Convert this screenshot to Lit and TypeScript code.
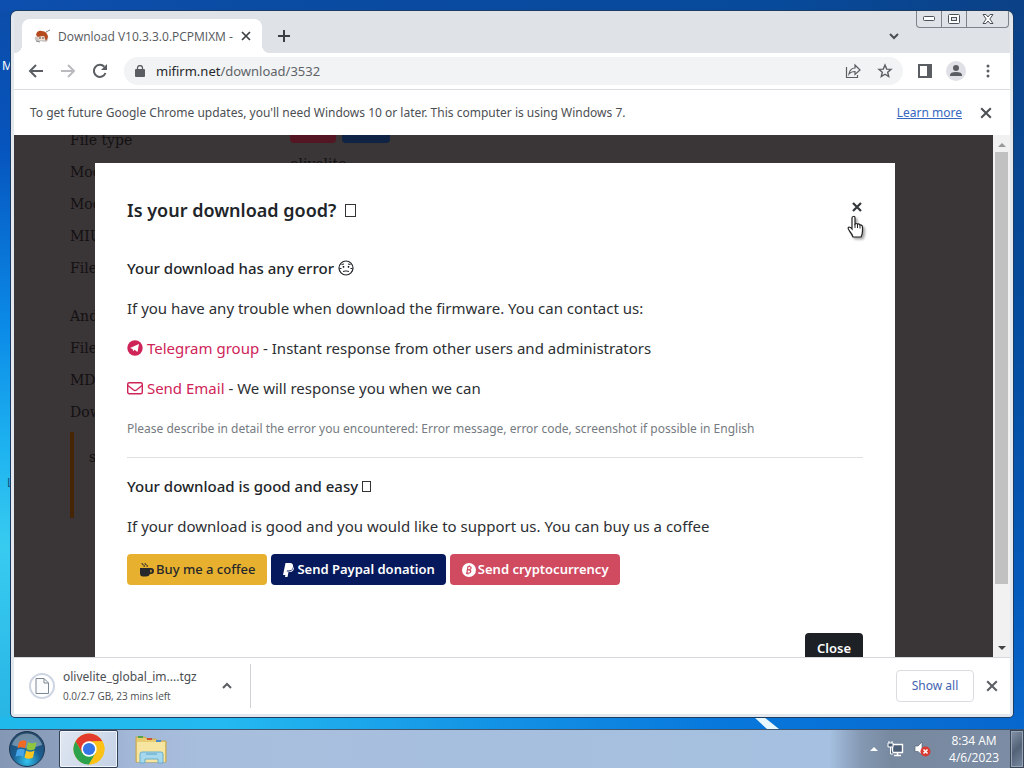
import { LitElement, html, css } from "lit";
import { customElement } from "lit/decorators.js";

const cross = (s: number, w: number) => html`<svg width=${s} height=${s} viewBox="0 0 10 10"><path d="M1 1L9 9M9 1L1 9" stroke="currentColor" stroke-width=${w} fill="none"/></svg>`;

@customElement("browser-chrome")
class BrowserChrome extends LitElement {
  static styles = css`
    :host { display: block; color: #5a5e63; }
    * { box-sizing: border-box; }
    svg { display: block; flex: none; }
    button { border: 0; padding: 0; background: none; color: inherit; font: inherit; display: flex; align-items: center; justify-content: center; }
    .strip { height: 42px; background: #dfe2e7; display: flex; align-items: flex-end; padding-left: 8px; border-radius: 5px 5px 0 0; position: relative; }
    .tab { width: 240px; height: 34px; background: #fff; border-radius: 8px 8px 0 0; display: flex; align-items: center; padding: 0 9px 0 12px; gap: 8px; position: relative; }
    .tab::before, .tab::after { content: ""; position: absolute; bottom: 0; width: 8px; height: 8px; }
    .tab::before { left: -8px; background: radial-gradient(circle at 0 0, transparent 8px, #fff 8px); }
    .tab::after { right: -8px; background: radial-gradient(circle at 100% 0, transparent 8px, #fff 8px); }
    .tabtext { flex: 1; min-width: 0; font-family: "Open Sans", sans-serif; font-size: 12px; white-space: nowrap; color: #55585c; }
    .close { width: 14px; height: 14px; color: #3c4043; }
    .plus { width: 28px; height: 34px; margin-left: 8px; color: #3c4043; }
    .search { margin-left: auto; width: 20px; height: 34px; margin-right: 106px; color: #4b4f54; }
    .caption { position: absolute; right: 1px; top: 0; height: 17px; display: flex; border: 1px solid #7d838b; border-top: 0; border-radius: 0 0 4px 4px; color: #4b515a; }
    .caption button { width: 25px; border-right: 1px solid #7d838b; }
    .caption button:last-child { width: 41px; border-right: 0; }
    .bar { height: 37px; display: flex; align-items: center; background: #fff; padding: 0 14px; border-bottom: 1px solid #dadce0; }
    .nav { width: 16px; height: 16px; margin-right: 16px; }
    .nav.off { color: #b9bbbe; }
    .omni { flex: 1; height: 28px; border-radius: 14px; background: #f1f3f4; display: flex; align-items: center; padding: 0 10px 0 11px; }
    .url { position: relative; flex: 1; font-size: 13px; margin-left: 11px; white-space: nowrap; color: #5f6368; }
    .url input { border: 0; background: none; outline: 0; font: inherit; padding: 0; width: 100%; position: absolute; inset: 0; opacity: 0; }
    .url b { font-weight: 400; color: #27292c; }
    .icons { display: flex; gap: 16px; }
    .side { display: flex; align-items: center; margin-left: 15px; gap: 14px; }
    .side button:last-child { width: 16px; }
    .avatar { width: 20px; height: 20px; border-radius: 50%; background: #dfe1e6; }
    .info { height: 45px; display: flex; align-items: center; padding: 0 18px 0 16px; font-size: 12px; color: #4c4f53; background: #fff; white-space: nowrap; }
    .info a { margin-left: auto; margin-right: 18px; color: #3867c0; text-decoration: underline; }
  `;
  render() {
    return html`
      <div class="strip">
        <div class="tab">
          <svg width="16" height="16" viewBox="0 0 16 16"><path d="M1 9Q0 14 5 13L12 14Q15 12 14 8L12 5Z" fill="#c9c6c4"/><path d="M2 7Q3 2 8 3Q13 3 14 9L12 13L10 8L4 9Z" fill="#b54a1e"/><path d="M4 9L10 8L11 12L5 12Z" fill="#f6dfd0"/><path d="M12 4L16 2M2 13L6 14" stroke="#888" stroke-width="1"/><circle cx="6" cy="10" r=".8" fill="#333"/><circle cx="9" cy="10" r=".8" fill="#333"/></svg>
          <span class="tabtext">Download V10.3.3.0.PCPMIXM -</span>
          <button class="close" aria-label="Close tab">${cross(10, 1.7)}</button>
        </div>
        <button class="plus" aria-label="New tab"><svg width="12" height="12" viewBox="0 0 12 12"><path d="M6 0V12M0 6H12" stroke="currentColor" stroke-width="2"/></svg></button>
        <button class="search" aria-label="Search tabs"><svg width="10" height="7" viewBox="0 0 10 7"><path d="M1 1L5 5L9 1" stroke="currentColor" stroke-width="2" fill="none"/></svg></button>
        <div class="caption">
          <button aria-label="Minimize"><svg width="12" height="6" viewBox="0 0 12 6"><rect x=".5" y=".5" width="11" height="4" rx="1" fill="#fff" stroke="currentColor"/></svg></button>
          <button aria-label="Maximize"><svg width="12" height="10" viewBox="0 0 12 10"><rect x=".5" y=".5" width="11" height="9" rx="1" fill="#fff" stroke="currentColor"/><rect x="3.5" y="3.5" width="5" height="3" fill="#dfe2e7" stroke="currentColor"/></svg></button>
          <button aria-label="Close window"><svg width="12" height="10" viewBox="0 0 12 10"><path d="M1 .5H4L6 3L8 .5H11L7.800 5L11 9.500H8L6 7L4 9.500H1L4.200 5Z" fill="#fff" stroke="currentColor"/></svg></button>
        </div>
      </div>
      <div class="bar">
        <button class="nav" aria-label="Back"><svg width="16" height="16" viewBox="0 0 16 16"><path d="M15 8H2M8 2L2 8L8 14" fill="none" stroke="currentColor" stroke-width="2"/></svg></button>
        <button class="nav off" aria-label="Forward"><svg width="16" height="16" viewBox="0 0 16 16"><path d="M1 8H14M8 2L14 8L8 14" fill="none" stroke="currentColor" stroke-width="2"/></svg></button>
        <button class="nav" aria-label="Reload"><svg width="16" height="16" viewBox="0 0 16 16"><path d="M13.500 10A6 6 0 1 1 12.300 3.800" fill="none" stroke="currentColor" stroke-width="2"/><path d="M15 1V7H9Z" fill="currentColor"/></svg></button>
        <div class="omni">
          <svg width="10" height="12" viewBox="0 0 10 12"><path d="M1 4H9Q10 4 10 5V11Q10 12 9 12H1Q0 12 0 11V5Q0 4 1 4Z" fill="currentColor"/><path d="M2.500 5V3A2.500 2.500 0 0 1 7.500 3V5" fill="none" stroke="currentColor" stroke-width="1.300"/></svg>
          <label class="url"><b>mifirm.net</b>/download/3532<input aria-label="Address" value="mifirm.net/download/3532"></label>
          <div class="icons">
            <button aria-label="Share"><svg width="16" height="16" viewBox="0 0 16 16"><path d="M1.500 4V14.500H12.500V12M4 11Q5 5 10 5V2L15 7L10 11.500V8.500Q6 8.500 4 11Z" fill="none" stroke="currentColor" stroke-width="1.200"/></svg></button>
            <button aria-label="Bookmark"><svg width="16" height="16" viewBox="0 0 16 16"><path d="M8 2L9.700 6.100L14 6.400L10.700 9.200L11.700 13.500L8 11.200L4.300 13.500L5.300 9.200L2 6.400L6.300 6.100Z" fill="none" stroke="currentColor" stroke-width="1.400"/></svg></button>
          </div>
        </div>
        <div class="side">
          <button aria-label="Side panel"><svg width="14" height="14" viewBox="0 0 14 14"><path d="M1 1H13V13H1Z" fill="none" stroke="currentColor" stroke-width="2"/><path d="M9 0H14V14H9Z" fill="currentColor"/></svg></button>
          <button class="avatar" aria-label="Profile"><svg width="14" height="14" viewBox="0 0 14 14"><circle cx="7" cy="4" r="3" fill="currentColor"/><path d="M1 12V11Q1 8 7 8Q13 8 13 11V12Z" fill="currentColor"/></svg></button>
          <button aria-label="Menu"><svg width="16" height="16" viewBox="0 0 16 16"><g fill="currentColor"><circle cx="8" cy="3" r="1.500"/><circle cx="8" cy="8" r="1.500"/><circle cx="8" cy="13" r="1.500"/></g></svg></button>
        </div>
      </div>
      <div class="info">
        <span>To get future Google Chrome updates, you'll need Windows 10 or later. This computer is using Windows 7.</span>
        <a href="#">Learn more</a>
        <button aria-label="Dismiss">${cross(12, 1.7)}</button>
      </div>`;
  }
}

@customElement("firmware-page")
class FirmwarePage extends LitElement {
  static styles = css`
    :host { display: flex; flex: 1; min-height: 0; background: #3a3537; overflow: hidden; }
    * { box-sizing: border-box; }
    svg { flex: none; }
    .view { flex: 1; position: relative; overflow: hidden; }
    .details { margin: -11px 0 0; padding: 0 56px; font: 14px/32px "DejaVu Serif", serif; color: #131112; display: grid; grid-template-columns: 220px 1fr; }
    .details dt, .details dd { margin: 0; height: 32px; white-space: nowrap; }
    .details .value { line-height: 16px; }
    .details .gap { margin-top: 16px; }
    .tags { display: flex; gap: 6px; }
    .tag { width: 46px; height: 19px; border-radius: 4px; background: #541622; }
    .tag.blue { background: #0f2444; width: 48px; }
    .note { margin: 4px 56px; height: 86px; border-left: 4px solid #452503; padding: 9px 15px; font: 14px/32px "DejaVu Serif", serif; color: #131112; }
    .overlay { position: absolute; inset: 0; padding: 28px 17px 0 0; display: flex; justify-content: center; align-items: flex-start; }
    .modal { width: 800px; max-width: 92%; background: #fff; padding: 32px; font: 15px/24px "Noto Sans", sans-serif; color: #2c2f33; }
    .head { display: flex; justify-content: space-between; align-items: flex-start; margin-bottom: 31px; }
    h2 { margin: 0; font-size: 18px; line-height: 30px; font-weight: 600; color: #212529; }
    h3 { margin: 0 0 16px; font-size: 15px; line-height: 24px; font-weight: 500; color: #212529; }
    p { margin: 0 0 16px; }
    .small { font-size: 12px; line-height: 25px; color: #757b81; }
    hr { border: 0; border-top: 1px solid #dfe0e1; margin: 16px 0; }
    a { color: #cf2458; text-decoration: none; }
    a svg { vertical-align: -2px; }
    h3 svg { vertical-align: -2px; }
    .box { display: inline-block; border: 1px solid #333; width: 11px; height: 13px; margin-left: 4px; }
    h3 .box { width: 9px; height: 11px; margin-left: 0; }
    .x { border: 0; background: none; padding: 0; width: 12px; height: 24px; color: #33363a; display: flex; align-items: center; justify-content: center; }
    .buttons { display: flex; gap: 4px; }
    .btn { border: 0; border-radius: 4px; height: 31px; padding: 0 11px 0 12px; font: 600 13px/21px "Noto Sans", sans-serif; display: flex; align-items: center; gap: 2px; color: #fff; background: #d04a60; white-space: nowrap; }
    .btn.gold { background: #e7b02f; color: #26282b; font-weight: 500; padding: 0 12px; }
    .btn.navy { background: #06195c; }
    .btn.dark { background: #1d2125; padding: 0 12px; }
    .foot { display: flex; justify-content: flex-end; margin-top: 48px; }
    .scroll { width: 17px; background: #f1f1f1; display: flex; flex-direction: column; align-items: center; justify-content: space-between; padding: 7px 0 6px; }
    .thumb { width: 13px; flex: 1; margin: 5px 0 62px; background: #c1c1c1; }
    .hand { position: absolute; left: 833px; top: 80px; filter: drop-shadow(2px 2px 1px #0005); }
  `;
  render() {
    const rows = ["Model", "MIUI", "File"];
    const rows2 = ["Andr", "File", "MD5", "Dow"];
    return html`
      <div class="view">
        <dl class="details">
          <dt>File type</dt><dd class="tags"><span class="tag"></span><span class="tag blue"></span></dd>
          <dt>Model</dt><dd class="value">olivelite</dd>
          ${rows.map((r) => html`<dt>${r}</dt><dd></dd>`)}
          ${rows2.map((r, i) => html`<dt class=${i ? "" : "gap"}>${r}</dt><dd></dd>`)}
        </dl>
        <div class="note">s</div>
        <div class="overlay">
          <div class="modal" role="dialog" aria-label="Is your download good?">
            <div class="head"><h2>Is your download good? <span class="box"></span></h2>
              <button class="x" aria-label="Close dialog">${cross(10, 2.2)}</button></div>
            <h3>Your download has any error <svg width="16" height="16" viewBox="0 0 16 16"><circle cx="8" cy="8" r="7" fill="none" stroke="currentColor" stroke-width="1.200"/><path d="M5 11.500Q8 10.300 11 11.500M3.500 4.500L6 4M10 4L12.500 4.500M1.500 8.500H3.500M12.500 8.500H14.500" fill="none" stroke="currentColor"/><circle cx="5.500" cy="6.800" r=".9"/><circle cx="10.500" cy="6.800" r=".9"/></svg></h3>
            <p>If you have any trouble when download the firmware. You can contact us:</p>
            <p><a href="#"><svg width="16" height="16" viewBox="0 0 16 16"><circle cx="8" cy="8" r="7.700" fill="currentColor"/><path d="M3 8L12 4L10.500 12L7.500 9.800L6 11.300L5.700 9Z" fill="#fff"/></svg> Telegram group</a> - Instant response from other users and administrators</p>
            <p><a href="#"><svg width="16" height="16" viewBox="0 0 16 16"><rect x=".7" y="2.700" width="14.600" height="11" rx="1.500" fill="none" stroke="currentColor" stroke-width="1.400"/><path d="M1 5.500L6.500 10Q8 11 9.500 10L15 5.500" fill="none" stroke="currentColor" stroke-width="1.400"/></svg> Send Email</a> - We will response you when we can</p>
            <p class="small">Please describe in detail the error you encountered: Error message, error code, screenshot if possible in English</p>
            <hr>
            <h3>Your download is good and easy <span class="box"></span></h3>
            <p>If your download is good and you would like to support us. You can buy us a coffee</p>
            <div class="buttons">
              <button class="btn gold"><svg width="15" height="14" viewBox="0 0 15 14"><path fill-rule="evenodd" d="M1 5H12A2.700 2.700 0 0 1 12 11H11Q10 13.500 7 13.500H4Q1 13.500 1 10ZM11.300 6.500V9.500A1.500 1.500 0 0 0 11.300 6.500Z" fill="currentColor"/><path d="M3 0Q3 2 4.500 2T5 4M6 0Q6 2 7.500 2T8 4" fill="none" stroke="currentColor"/></svg>Buy me a coffee</button>
              <button class="btn navy"><svg width="12" height="14" viewBox="0 0 12 14"><path d="M2.500 0H7Q10.500 0 10 4Q9.500 7.500 5.500 7.500H4L3 12H0Z" fill="currentColor"/><path d="M11 3Q11.500 9 6.500 9H5.500L4.500 14H2L3 8.500H6Q10 8 11 3Z" fill="currentColor"/></svg>Send Paypal donation</button>
              <button class="btn"><svg width="14" height="14" viewBox="0 0 14 14"><circle cx="7" cy="7" r="7" fill="#fff"/><path d="M5.500 3.500H7.500Q9.500 3.700 9 5.300Q8.600 6.800 6 6.800Q9 6.800 8.800 8.500Q8.500 10.500 4 10.300M6 3.500L4.800 10.300M7.300 2.500V3.500M6 10.300V11.500" fill="none" stroke="#d04a60" stroke-width="1.200"/></svg>Send cryptocurrency</button>
            </div>
            <div class="foot"><button class="btn dark">Close</button></div>
          </div>
        </div>
        <svg class="hand" width="18" height="24" viewBox="0 0 18 24"><path d="M6.500 1.500Q8 1 8 3V9Q9 8 10.500 9Q12 8.500 13 10Q15 9.500 15.500 12V16Q15.500 19 14 22H6Q5 19 2.500 16Q0 12.500 2 12Q3.500 12 5 14V3Q5 1.500 6.500 1.500Z" fill="#fff" stroke="#222" stroke-width="1.200"/><path d="M8 9V13M10.500 9V13M13 10V13.500" stroke="#222"/></svg>
      </div>
      <div class="scroll">
        <svg width="8" height="5" viewBox="0 0 8 5"><path d="M0 5L4 1L8 5Z" fill="#999"/></svg>
        <div class="thumb"></div>
        <svg width="8" height="5" viewBox="0 0 8 5"><path d="M0 0L4 4L8 0Z" fill="#444"/></svg>
      </div>`;
  }
}

@customElement("download-shelf")
class DownloadShelf extends LitElement {
  static styles = css`
    :host { display: flex; align-items: center; height: 57px; flex: none; background: #fff; border-top: 1px solid #d5d7da; padding: 0 12px 1px 15px; box-sizing: border-box; }
    * { box-sizing: border-box; }
    .item { display: flex; align-items: center; gap: 8px; height: 44px; width: 222px; border-right: 1px solid #cfd1d4; padding-right: 18px; }
    .texts { flex: 1; white-space: nowrap; color: #4b4e52; }
    .name { font-size: 12px; line-height: 20px; }
    .sub { font-family: "Open Sans", sans-serif; font-size: 10px; line-height: 18px; }
    button { border: 0; background: none; padding: 0; color: #5a5e63; display: flex; font: inherit; }
    .all { margin-left: auto; margin-right: 12px; width: 78px; height: 32px; border: 1px solid #dadce0; border-radius: 4px; align-items: center; justify-content: center; font-size: 12px; color: #3f63b0; }
  `;
  render() {
    return html`
      <div class="item">
        <svg width="26" height="26" viewBox="0 0 26 26"><circle cx="13" cy="13" r="12" fill="none" stroke="#cdd5e3" stroke-width="2"/><path d="M7 5.500H15L19.500 10V20.500H7ZM15 5.500V10H19.500" fill="#fbfcfe" stroke="#7c8794"/></svg>
        <div class="texts"><div class="name">olivelite_global_im....tgz</div><div class="sub">0.0/2.7 GB, 23 mins left</div></div>
        <button aria-label="Download options"><svg width="10" height="7" viewBox="0 0 10 7"><path d="M1 6L5 2L9 6" stroke="currentColor" stroke-width="2" fill="none"/></svg></button>
      </div>
      <button class="all">Show all</button>
      <button aria-label="Close shelf">${cross(12, 1.7)}</button>`;
  }
}

@customElement("task-bar")
class TaskBar extends LitElement {
  static styles = css`
    :host { display: flex; height: 39px; flex: none; align-items: stretch; border-top: 1px solid #40566f; box-sizing: border-box; color: #fff;
      background: linear-gradient(90deg, #8497b5 0, #8c9fbd 60px, #a3b8d8 130px, #a8bedd 200px, #a5c0e0 81%, #8599b4 84%, #77899f 87%, #7b8ca4 100%); }
    * { box-sizing: border-box; }
    svg { display: block; }
    button { border: 0; background: none; padding: 0; color: inherit; font: inherit; display: flex; align-items: center; justify-content: center; }
    .start { width: 54px; }
    .app { width: 59px; margin-left: 5px; }
    .app.on { background: linear-gradient(120deg, #dfe6f1, #c4d2e6); border: 1px solid #2f4156; border-radius: 2px; box-shadow: inset 0 0 0 1px #f2f6fb; }
    .app + .app { margin-left: 3px; }
    .tray { margin-left: auto; display: flex; align-items: center; gap: 9px; }
    .clock { font-family: "Open Sans", sans-serif; font-size: 12px; line-height: 17px; text-align: center; margin: 0 2px 0 8px; }
    .peek { align-self: stretch; width: 14px; border: 1px solid #3a4655; box-shadow: inset 0 0 0 1px #94a3b6; background: linear-gradient(135deg, #8493a7, #536277 50%, #7888a0); }
  `;
  render() {
    return html`
      <button class="start" aria-label="Start"><svg width="38" height="38" viewBox="0 0 38 38"><defs><radialGradient id="o" cx=".5" cy=".85" r=".8"><stop offset="0" stop-color="#33c4f0"/><stop offset=".5" stop-color="#1b5f92"/><stop offset="1" stop-color="#234a6c"/></radialGradient></defs><circle cx="19" cy="19" r="17.500" fill="url(#o)" stroke="#1d3550"/><path d="M4 15A15.500 15.500 0 0 1 34 15Q19 21 4 15Z" fill="#fff" opacity=".35"/><path d="M11 12Q15 9 18.500 11.500L17 18.500Q13 16 9.500 18.500Z" fill="#ef6b25"/><path d="M20 12Q24 14.500 28.500 12L27 19Q22.500 21.500 18.500 19Z" fill="#8fc63f"/><path d="M9 20Q13 17.500 16.700 20L15 27Q11.500 24.500 7.500 27Z" fill="#45a5e8"/><path d="M18.200 20.500Q22 23 26.500 20.500L25 27.500Q20.500 30 16.500 27.500Z" fill="#fcc520"/></svg></button>
      <button class="app on" aria-label="Google Chrome"><svg width="32" height="32" viewBox="0 0 32 32"><circle cx="16" cy="16" r="15.500" fill="#fbc116"/><path d="M2.600 8.200A15.500 15.500 0 0 1 29.400 8.200L16 8.500L9.300 20Z" fill="#e23b2e"/><path d="M2.600 8.200A15.500 15.500 0 0 0 16 31.500L22.700 20L16 16L9.300 20Z" fill="#2da24c"/><path d="M29.400 8.250A15.500 15.500 0 0 1 16 31.500L22.700 20L20 8.250Z" fill="#fbc116"/><circle cx="16" cy="16" r="7.700" fill="#fff"/><circle cx="16" cy="16" r="6.100" fill="#3476e5"/></svg></button>
      <button class="app" aria-label="File Explorer"><svg width="34" height="32" viewBox="0 0 34 32"><path d="M2 4H11L13 6H22L24 8H32V29H2Z" fill="#e8cd72" stroke="#c4a64f"/><path d="M3 9H31V29H3Z" fill="#f6e5a0"/><path d="M4 3H9V5H4Z" fill="#53a54a"/><path d="M13 5H18V7H13Z" fill="#cf5335"/><path d="M22 7H27V9H22Z" fill="#4b8cc5"/><path d="M6 21Q6 19 8 19H27Q29 19 29 21V30H24V26H11V30H6Z" fill="#a6d8ee" stroke="#69aecc"/><path d="M12 21H23" stroke="#5da2c3"/></svg></button>
      <div class="tray">
        <svg width="8" height="4" viewBox="0 0 8 4"><path d="M0 4L4 0L8 4Z" fill="#fff"/></svg>
        <svg width="18" height="16" viewBox="0 0 18 16"><path d="M5.500 3.500H15.500V11.500H5.500Z" fill="#4c5e76" stroke="#fff" stroke-width="1.400"/><path d="M7 14.500H14M10.500 12V14" stroke="#fff" stroke-width="1.500"/><path d="M1 2H6V6H1ZM2 0V2M5 0V2M3.500 6V13H6" fill="#4c5e76" stroke="#fff"/></svg>
        <svg width="18" height="16" viewBox="0 0 18 16"><path d="M1 5H4L8 1V14L4 10.500H1Z" fill="#fff" stroke="#59677a" stroke-width=".7"/><circle cx="11.500" cy="10.500" r="5" fill="#d83a31"/><path d="M9.500 8.500L13.500 12.500M13.500 8.500L9.500 12.500" stroke="#fff" stroke-width="1.600"/></svg>
        <div class="clock">8:34 AM<br>4/6/2023</div>
        <button class="peek" aria-label="Show desktop"></button>
      </div>`;
  }
}

@customElement("app-root")
class AppRoot extends LitElement {
  static styles = css`
    :host { display: flex; flex-direction: column; height: 100vh; overflow: hidden; font-family: "Noto Sans", sans-serif; }
    * { box-sizing: border-box; }
    .desktop { flex: 1; min-height: 0; position: relative; display: flex; padding: 11px 11px 12px;
      background: linear-gradient(90deg, #0d4fae 0, #0a4ba3 25%, #074a9b 75%, #0b4186 100%) top / 100% 11px no-repeat,
        linear-gradient(90deg, #1fb9ec 0, #24b9f0 22%, #1597e6 45%, #0878dc 70%, #0767cd 100%) bottom / 100% 12px no-repeat,
        linear-gradient(#0c4da8 0, #0654bd 20%, #0b8be8 45%, #1eb4f0 62%, #38cbf0 75%, #27b4e4 100%) left / 50% 100% no-repeat,
        linear-gradient(#0b4186 0, #044a9b 40%, #0457b5 75%, #0767cd 100%) right / 50% 100% no-repeat; }
    .streak { position: absolute; left: 752px; bottom: 0; }
    .label { position: absolute; left: 2px; top: 58px; width: 9px; overflow: hidden; font-size: 12px; line-height: 16px; color: #fff; }
    .label.low { left: 7px; top: 475px; width: 4px; color: #14507c; }
    .window { flex: 1; min-width: 0; position: relative; display: flex; flex-direction: column; border: 3px solid #e3e7ee; border-top: 0; border-radius: 6px 6px 4px 4px; background: #dfe2e7; box-shadow: 0 0 0 1px #1c3c63; }
  `;
  render() {
    return html`
      <div class="desktop">
        <svg class="streak" width="30" height="12" viewBox="0 0 30 12"><path d="M2 0H12L27 12H15Z" fill="#e9f8ff"/></svg>
        <span class="label">M</span><span class="label low">L</span>
        <div class="window">
          <browser-chrome></browser-chrome>
          <firmware-page></firmware-page>
          <download-shelf></download-shelf>
        </div>
      </div>
      <task-bar></task-bar>`;
  }
}
